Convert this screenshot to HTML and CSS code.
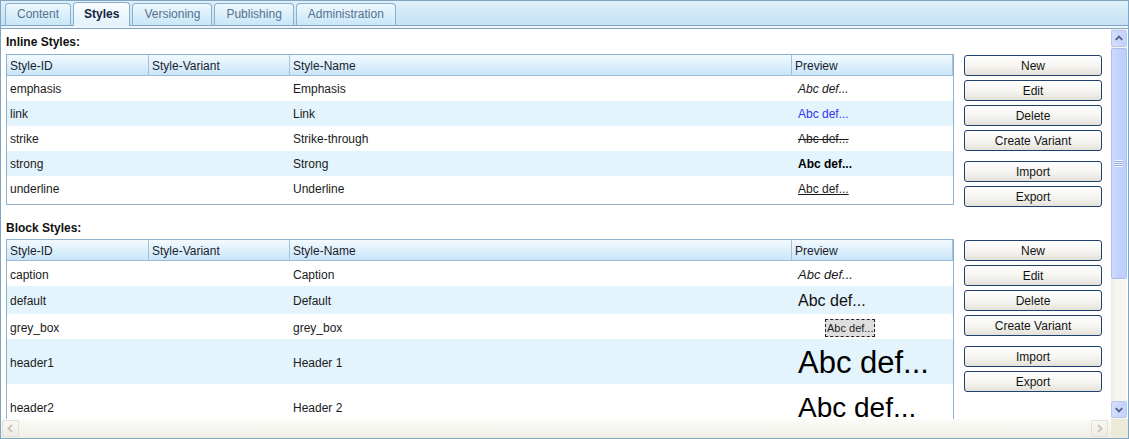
FILE: index.html
```html
<!DOCTYPE html>
<html>
<head>
<meta charset="utf-8">
<title>Styles</title>
<link rel="stylesheet" href="styles.css">
</head>
<body>
<div class="window">
  <div class="tabbar">
    <div class="tab">Content</div>
    <div class="tab active">Styles</div>
    <div class="tab">Versioning</div>
    <div class="tab">Publishing</div>
    <div class="tab">Administration</div>
  </div>
  <div class="gap"></div>
  <div class="panel">
    <div class="main">
      <div class="viewport">
        <section class="group">
          <div class="group-title">Inline Styles:</div>
          <div class="group-row">
            <div class="grid inline-grid">
              <div class="head">
                <div class="hc">Style-ID</div>
                <div class="hc">Style-Variant</div>
                <div class="hc">Style-Name</div>
                <div class="hc">Preview</div>
              </div>
              <div class="row r25"><div class="c">emphasis</div><div class="c"></div><div class="c">Emphasis</div><div class="c pv"><span class="p-em">Abc def...</span></div></div>
              <div class="row r25 alt"><div class="c">link</div><div class="c"></div><div class="c">Link</div><div class="c pv"><span class="p-link">Abc def...</span></div></div>
              <div class="row r25"><div class="c">strike</div><div class="c"></div><div class="c">Strike-through</div><div class="c pv"><span class="p-strike">Abc def...</span></div></div>
              <div class="row r25 alt"><div class="c">strong</div><div class="c"></div><div class="c">Strong</div><div class="c pv"><span class="p-strong">Abc def...</span></div></div>
              <div class="row r25"><div class="c">underline</div><div class="c"></div><div class="c">Underline</div><div class="c pv"><span class="p-under">Abc def...</span></div></div>
            </div>
            <div class="buttons">
              <div class="btn">New</div>
              <div class="btn">Edit</div>
              <div class="btn">Delete</div>
              <div class="btn">Create Variant</div>
              <div class="btn sep">Import</div>
              <div class="btn">Export</div>
            </div>
          </div>
        </section>
        <section class="group group2">
          <div class="group-title t2">Block Styles:</div>
          <div class="group-row">
            <div class="grid block-grid">
              <div class="head">
                <div class="hc">Style-ID</div>
                <div class="hc">Style-Variant</div>
                <div class="hc">Style-Name</div>
                <div class="hc">Preview</div>
              </div>
              <div class="row r25"><div class="c">caption</div><div class="c"></div><div class="c">Caption</div><div class="c pv"><span class="p-caption">Abc def...</span></div></div>
              <div class="row r28 alt"><div class="c">default</div><div class="c"></div><div class="c">Default</div><div class="c pv"><span class="p-default">Abc def...</span></div></div>
              <div class="row r25"><div class="c">grey_box</div><div class="c"></div><div class="c">grey_box</div><div class="c pv"><span class="p-grey">Abc def...</span></div></div>
              <div class="row r45 alt"><div class="c">header1</div><div class="c"></div><div class="c">Header 1</div><div class="c pv"><span class="p-h1">Abc def...</span></div></div>
              <div class="row r45"><div class="c">header2</div><div class="c"></div><div class="c">Header 2</div><div class="c pv"><span class="p-h2">Abc def...</span></div></div>
            </div>
            <div class="buttons">
              <div class="btn">New</div>
              <div class="btn">Edit</div>
              <div class="btn">Delete</div>
              <div class="btn">Create Variant</div>
              <div class="btn sep">Import</div>
              <div class="btn">Export</div>
            </div>
          </div>
        </section>
      </div>
      <div class="vscroll">
        <div class="sb-btn up">
          <svg width="15" height="15" viewBox="0 0 15 15"><polyline points="4,9 7.5,5.5 11,9" fill="none" stroke="#4d6185" stroke-width="2"/></svg>
        </div>
        <div class="track">
          <div class="thumb">
            <div class="grip"></div>
          </div>
        </div>
        <div class="sb-btn down">
          <svg width="15" height="15" viewBox="0 0 15 15"><polyline points="4,6 7.5,9.5 11,6" fill="none" stroke="#4d6185" stroke-width="2"/></svg>
        </div>
      </div>
    </div>
    <div class="hbar">
      <div class="hscroll">
        <div class="hs-btn">
          <svg width="15" height="15" viewBox="0 0 15 15"><polyline points="9,4 5.5,7.5 9,11" fill="none" stroke="#c9c7bb" stroke-width="2"/></svg>
        </div>
        <div class="hs-btn">
          <svg width="15" height="15" viewBox="0 0 15 15"><polyline points="6,4 9.5,7.5 6,11" fill="none" stroke="#c9c7bb" stroke-width="2"/></svg>
        </div>
      </div>
      <div class="corner"></div>
    </div>
  </div>
</div>
</body>
</html>
```

FILE: styles.css
```css
* { box-sizing: border-box; }
html, body { margin: 0; padding: 0; background: #fff; }
body {
  font-family: "Liberation Sans", Arial, sans-serif;
  font-size: 12px;
  color: #1b1b1b;
}
.window {
  width: 1129px;
  height: 439px;
  border: 1px solid #7fa5c3;
  display: flex;
  flex-direction: column;
  overflow: hidden;
  background: #fff;
}
.tabbar {
  flex: 0 0 25px;
  height: 25px;
  border-bottom: 1px solid #80a6c4;
  background: linear-gradient(#deeff9, #c5e2f3);
  display: flex;
  align-items: flex-end;
  gap: 2px;
  padding-left: 4px;
}
.tab {
  height: 22px;
  padding: 0 11px;
  line-height: 21px;
  border: 1px solid #8db0cc;
  border-bottom: none;
  border-radius: 4px 4px 0 0;
  background: linear-gradient(#eef8fe, #c8e6f7);
  color: #55718f;
  white-space: nowrap;
}
.tab.active {
  height: 24px;
  margin-bottom: -1px;
  padding: 0 10px;
  line-height: 22px;
  background: linear-gradient(#f8fcff, #e2f2fb);
  color: #14233f;
  font-weight: bold;
}
.gap { flex: 0 0 2px; height: 2px; background: #eef6fb; }
.panel {
  flex: 1;
  border-top: 1px solid #80a6c4;
  display: flex;
  flex-direction: column;
}
.main { flex: 0 0 390px; height: 390px; display: flex; }
.viewport {
  flex: 0 0 1110px;
  width: 1110px;
  height: 390px;
  overflow: hidden;
  padding-left: 5px;
  background: #fff;
}
.group-title {
  height: 25px;
  line-height: 26px;
  font-weight: bold;
  color: #111;
}
.group2 { margin-top: 8px; }
.group-title.t2 { height: 24px; line-height: 26px; }
.group-row { display: flex; gap: 10px; align-items: flex-start; }
.grid {
  width: 948px;
  border: 1px solid #8fb0cc;
  overflow: hidden;
  background: #fff;
}
.inline-grid { height: 151px; }
.block-grid { height: 200px; }
.head, .row {
  display: grid;
  grid-template-columns: 142px 141px 502px 161px;
}
.head {
  height: 21px;
  border-bottom: 1px solid #9dbbd6;
  background: linear-gradient(#f3faff, #d9eefb 60%, #c8e5f7);
}
.hc {
  border-right: 1px solid #a5c1da;
  padding-left: 3px;
  padding-top: 1px;
  line-height: 20px;
  color: #1d1d2d;
  white-space: nowrap;
}
.row { align-items: center; background: #fff; }
.row.alt { background: #e3f4fc; }
.r25 { height: 25px; }
.r28 { height: 28px; }
.r45 { height: 45px; }
.c { padding-left: 3px; white-space: nowrap; overflow: hidden; }
.block-grid .c { padding-top: 2px; }
.c.pv { padding-left: 6px; overflow: visible; }
.p-em { font-style: italic; }
.p-link { color: #3434f4; }
.p-strike { text-decoration: line-through; }
.p-strong { font-weight: bold; color: #000; }
.p-under { text-decoration: underline; }
.p-caption { font-style: italic; font-size: 13px; }
.p-default { font-size: 16px; color: #111; }
.p-grey {
  display: inline-block;
  margin-left: 27px;
  font-size: 11px;
  line-height: 16px;
  padding: 0 1px;
  border: 1px dashed #222;
  background: #dedede;
}
.p-h1 { font-size: 31px; color: #000; }
.p-h2 { font-size: 28px; color: #000; }
.buttons {
  width: 138px;
  padding-top: 1px;
  display: flex;
  flex-direction: column;
  gap: 4px;
}
.btn {
  height: 21px;
  border: 1px solid #1f416f;
  border-radius: 3px;
  background: linear-gradient(#ffffff, #f5f4f0 55%, #e4e1d8);
  text-align: center;
  line-height: 21px;
  color: #141414;
  white-space: nowrap;
}
.btn.sep { margin-top: 6px; }
.vscroll {
  flex: 0 0 16px;
  width: 16px;
  margin-right: 1px;
  display: flex;
  flex-direction: column;
  background: linear-gradient(90deg, #eeede5, #f6f5f0 30%, #f6f5f0);
}
.sb-btn {
  flex: 0 0 17px;
  height: 17px;
  border: 1px solid #b8c8f0;
  border-radius: 2px;
  background: linear-gradient(90deg, #d2defc, #c3d3fb);
  display: flex;
  align-items: center;
  justify-content: center;
}
.sb-btn.up { margin-top: 1px; }
.sb-btn.down { margin-bottom: 1px; }
.track { flex: 1; padding-top: 1px; }
.thumb {
  height: 231px;
  border: 1px solid #aabef0;
  border-radius: 2px;
  background: linear-gradient(90deg, #cddafc, #c1d2fb 50%, #bccefa);
  display: flex;
  align-items: center;
  justify-content: center;
}
.grip {
  width: 8px;
  height: 7px;
  background: repeating-linear-gradient(#f4f8ff 0 1px, #8fa8e8 1px 2px);
}
.hbar { flex: 1; display: flex; }
.hscroll {
  flex: 0 0 1110px;
  width: 1110px;
  display: flex;
  justify-content: space-between;
  align-items: flex-start;
  padding: 1px 3px 0 1px;
  background: linear-gradient(#fbfbf8, #efeee7);
}
.hs-btn {
  width: 17px;
  height: 17px;
  border: 1px solid #e3e1d6;
  border-radius: 2px;
  background: linear-gradient(#f8f7f2, #eeede4);
  display: flex;
  align-items: center;
  justify-content: center;
}
.corner { flex: 1; background: #ecead9; }
```
